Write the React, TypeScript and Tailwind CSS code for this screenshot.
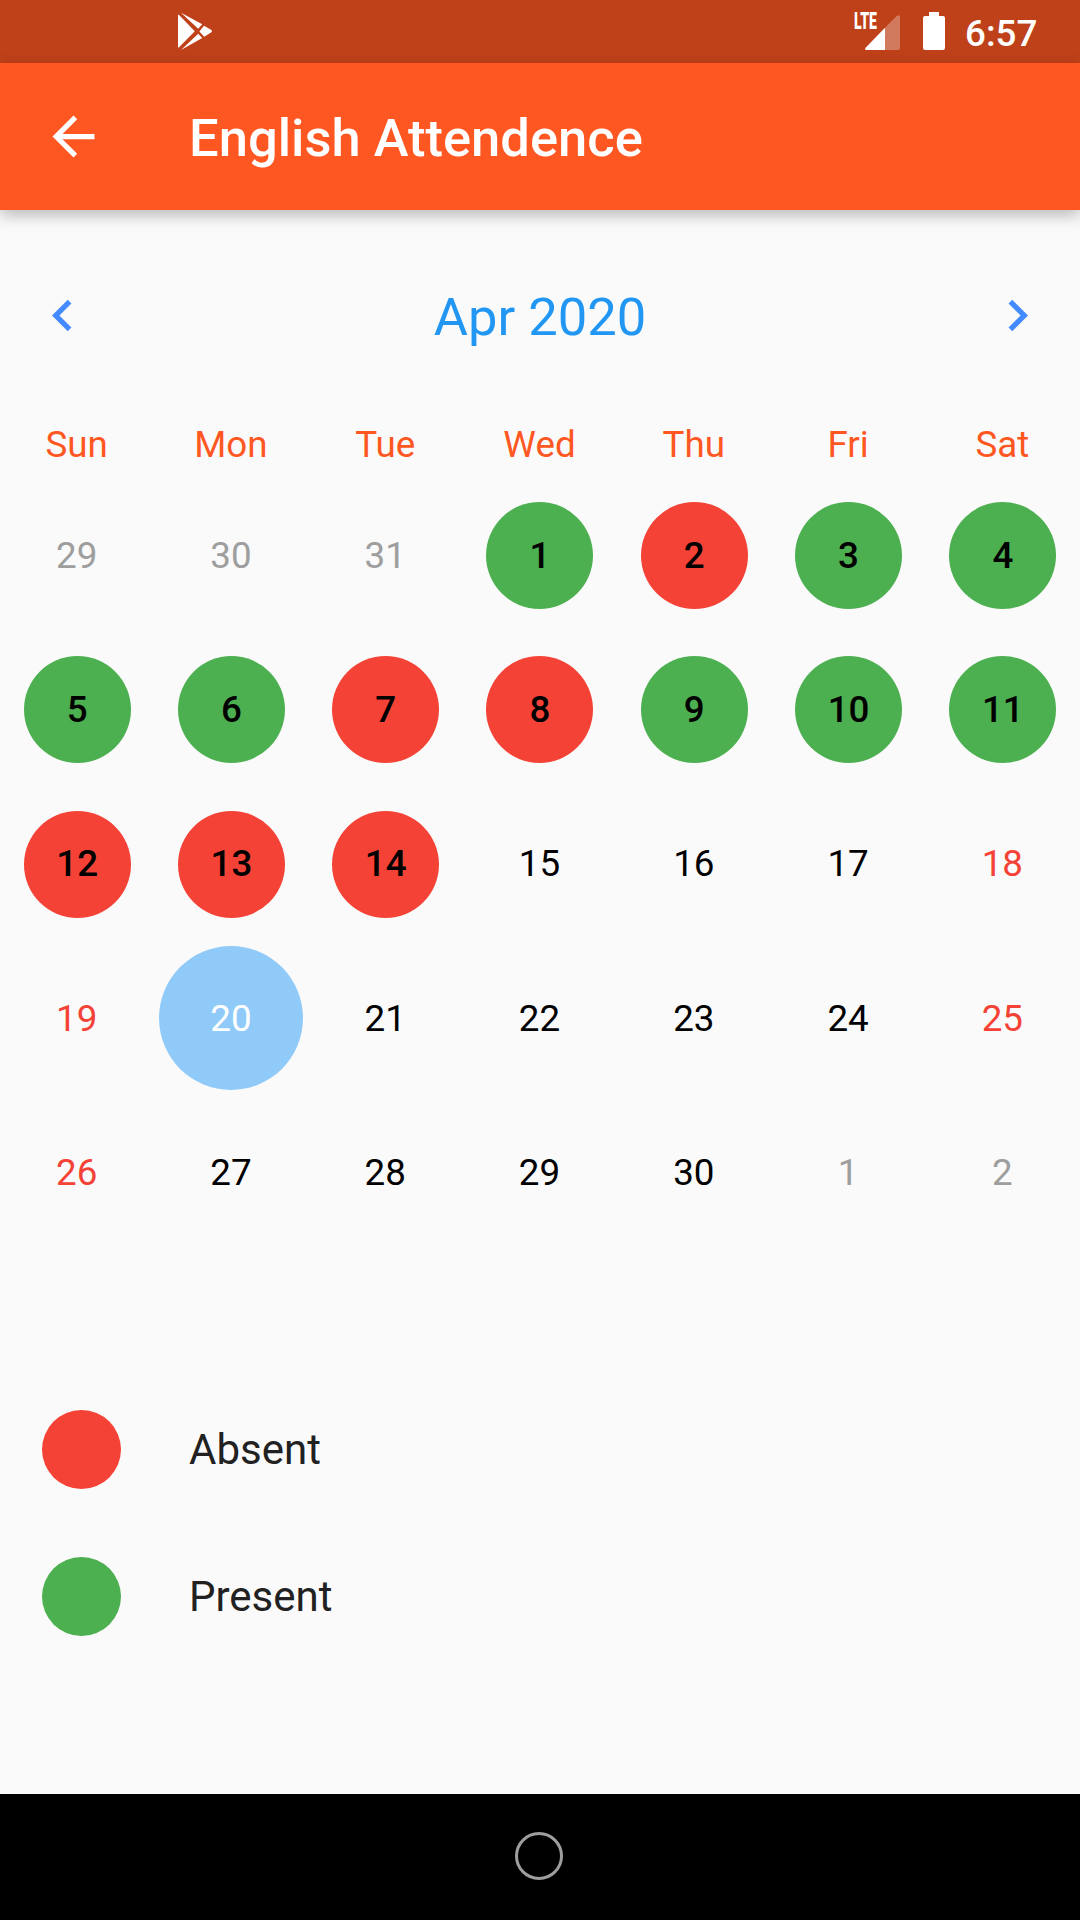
type Kind = "muted" | "present" | "absent" | "plain" | "weekend" | "selected";

const weekdays = ["Sun", "Mon", "Tue", "Wed", "Thu", "Fri", "Sat"];

const cell = (day: number, kind: Kind) => ({ day, kind });

const days = [
  cell(29, "muted"), cell(30, "muted"), cell(31, "muted"),
  cell(1, "present"), cell(2, "absent"), cell(3, "present"), cell(4, "present"),
  cell(5, "present"), cell(6, "present"), cell(7, "absent"), cell(8, "absent"),
  cell(9, "present"), cell(10, "present"), cell(11, "present"),
  cell(12, "absent"), cell(13, "absent"), cell(14, "absent"),
  cell(15, "plain"), cell(16, "plain"), cell(17, "plain"), cell(18, "weekend"),
  cell(19, "weekend"), cell(20, "selected"), cell(21, "plain"), cell(22, "plain"),
  cell(23, "plain"), cell(24, "plain"), cell(25, "weekend"),
  cell(26, "weekend"), cell(27, "plain"), cell(28, "plain"), cell(29, "plain"),
  cell(30, "plain"), cell(1, "muted"), cell(2, "muted"),
];

const dayStyles: Record<Kind, string> = {
  muted: "pr-px text-[#9e9e9e]",
  plain: "pr-px text-black",
  weekend: "pr-px text-[#f44336]",
  present: "size-[107px] bg-[#4caf50] font-medium text-black",
  absent: "size-[107px] bg-[#f44336] font-medium text-black",
  selected: "size-[144px] bg-[#90caf9] pr-px text-white",
};

function StatusBar() {
  return (
    <div className="flex h-[63px] items-start bg-[#bf4119] text-white">
      <svg className="ml-[177px] mt-3 h-[39px] w-9" viewBox="0 0 36 39" fill="currentColor">
        <path d="M1.6 2.6 17.8 19.2 1.6 35.8Q1 35.4 1 34.4V4Q1 3 1.6 2.6Z" />
        <path d="M4 .7 25.2 12.3 21.2 16.8Z" />
        <path d="M4 38 25.2 26 21.2 21.8Z" />
        <path d="M27 13.8 34 17.8Q36 19.2 34 20.6L27.2 24.8 22.4 19.4Z" />
      </svg>
      <div className="ml-[641px] mt-[11px] w-[11px]">
        <span className="block w-10 origin-left scale-x-[0.61] text-[23px] font-black leading-[22px]">LTE</span>
      </div>
      <svg className="mt-[15px] h-[35px] w-[35px]" viewBox="0 0 35 35" fill="currentColor">
        <path d="M20 12.8 32 .8Q35-1 35 2V33Q35 35 33 35H20Z" opacity=".3" />
        <path d="M20 12.8V35H1.5Q-.8 35 .8 32.5Z" />
      </svg>
      <svg className="ml-[23px] mt-3 h-[38px] w-[22px]" viewBox="0 0 22 38" fill="currentColor">
        <path d="M6 0H16V4H20Q22 4 22 6V36Q22 38 20 38H2Q0 38 0 36V6Q0 4 2 4H6Z" />
      </svg>
      <span className="ml-5 mt-[13px] text-[36.75px] font-medium leading-[42px]">6:57</span>
    </div>
  );
}

function Legend({ label, dot }: { label: string; dot: string }) {
  return (
    <li className="flex h-[147px] items-center pl-[42px] text-[42px] text-[#212121]">
      <span className={`mr-[68px] size-[79px] rounded-full ${dot}`} />
      {label}
    </li>
  );
}

export default function App() {
  return (
    <div className="flex h-[1920px] w-[1080px] flex-col overflow-hidden bg-[#fafafa] font-['Roboto',sans-serif]">
      <StatusBar />
      <header className="flex h-[147px] shrink-0 items-center bg-[#ff5722] pl-[41.5px] text-white shadow-[0_5px_15px_rgba(0,0,0,0.27)]">
        <svg className="size-[63px]" viewBox="0 0 24 24" fill="currentColor">
          <path d="M20 11H7.83l5.59-5.59L12 4l-8 8 8 8 1.41-1.41L7.83 13H20v-2z" />
        </svg>
        <h1 className="ml-[84.5px] pt-[3px] text-[52.5px] font-medium leading-none">English Attendence</h1>
      </header>

      <div className="mt-[74px] flex h-[63px] items-center justify-between pl-[31px] pr-[31px] text-[#448aff]">
        <svg className="size-[63px]" viewBox="0 0 24 24" fill="currentColor">
          <path d="M15.41 7.41 14 6l-6 6 6 6 1.41-1.41L10.83 12z" />
        </svg>
        <h2 className="pt-[3px] text-[52.5px] leading-none text-[#2196f3]">Apr 2020</h2>
        <svg className="size-[63px]" viewBox="0 0 24 24" fill="currentColor">
          <path d="M10 6 8.59 7.41 13.17 12l-4.58 4.59L10 18l6-6z" />
        </svg>
      </div>

      <div className="mt-[76px] grid h-[43px] grid-cols-7 text-center text-[36.75px] leading-[43px] text-[#ff5722]">
        {weekdays.map((name) => (
          <span key={name} className="pr-px">{name}</span>
        ))}
      </div>

      <div className="mt-[12.3px] grid auto-rows-[154.3px] grid-cols-7 text-[36.75px]">
        {days.map(({ day, kind }, i) => (
          <div key={i} className="flex items-center justify-center">
            <span className={`flex items-center justify-center rounded-full ${dayStyles[kind]}`}>{day}</span>
          </div>
        ))}
      </div>

      <ul className="mt-[126px]">
        <Legend label="Absent" dot="bg-[#f44336]" />
        <Legend label="Present" dot="bg-[#4caf50]" />
      </ul>

      <nav className="mt-auto flex h-[126px] items-center justify-center bg-black pb-[2px] pr-[2px]">
        <span className="size-[48px] rounded-full border-[3px] border-[#9e9e9e]" />
      </nav>
    </div>
  );
}
